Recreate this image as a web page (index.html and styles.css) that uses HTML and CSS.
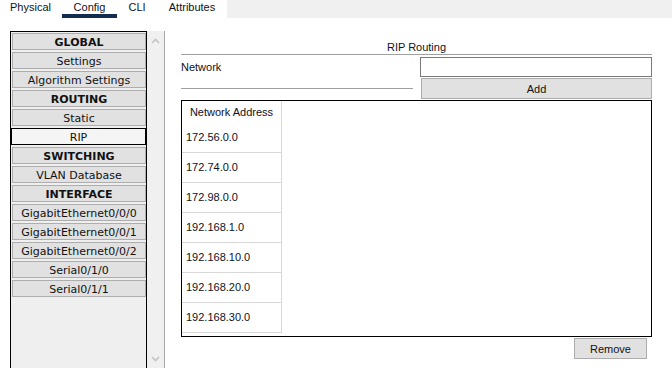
FILE: index.html
```html
<!DOCTYPE html>
<html lang="en">

<head>
    <meta charset="UTF-8">
    <title>Router - Config</title>
    <link rel="stylesheet" href="styles.css">
</head>

<body>
    <!-- Top tabs -->
    <div class="tabs">
        <div class="tab tabPhysical">Physical</div>
        <div class="tab tabConfig active">Config</div>
        <div class="tab tabCli">CLI</div>
        <div class="tab tabAttr">Attributes</div>
        <div class="tabsFill"></div>
    </div>

    <div class="main">
        <!-- Left menu -->
        <div class="side">
            <div class="sideList">
                <div class="item head">GLOBAL</div>
                <div class="item">Settings</div>
                <div class="item">Algorithm Settings</div>
                <div class="item head">ROUTING</div>
                <div class="item">Static</div>
                <div class="item selected">RIP</div>
                <div class="item head">SWITCHING</div>
                <div class="item">VLAN Database</div>
                <div class="item head">INTERFACE</div>
                <div class="item">GigabitEthernet0/0/0</div>
                <div class="item">GigabitEthernet0/0/1</div>
                <div class="item">GigabitEthernet0/0/2</div>
                <div class="item">Serial0/1/0</div>
                <div class="item">Serial0/1/1</div>
            </div>
            <div class="scroll">
                <svg width="9" height="6" viewBox="0 0 9 6"><path d="M1 5 L4.5 1.5 L8 5" fill="none" stroke="#c4c4c4" stroke-width="1.6"/></svg>
                <svg width="9" height="6" viewBox="0 0 9 6"><path d="M1 1 L4.5 4.5 L8 1" fill="none" stroke="#c4c4c4" stroke-width="1.6"/></svg>
            </div>
        </div>

        <!-- RIP panel -->
        <div class="panel">
            <div class="panelTitle">RIP Routing</div>
            <div class="netRow">
                <div class="netLabel">Network</div>
                <div class="netControls">
                    <input type="text" class="netInput">
                    <button class="btn addBtn">Add</button>
                </div>
            </div>
            <div class="netTable">
                <div class="netCol">
                    <div class="netHead">Network Address</div>
                    <div class="netCell">172.56.0.0</div>
                    <div class="netCell">172.74.0.0</div>
                    <div class="netCell">172.98.0.0</div>
                    <div class="netCell">192.168.1.0</div>
                    <div class="netCell">192.168.10.0</div>
                    <div class="netCell">192.168.20.0</div>
                    <div class="netCell">192.168.30.0</div>
                </div>
            </div>
            <div class="panelFoot">
                <button class="btn removeBtn">Remove</button>
            </div>
        </div>
    </div>
</body>

</html>
```

FILE: styles.css
```css
body {
    margin: 0;
    background-color: #ffffff;
    font-family: "Liberation Sans", Arial, sans-serif;
    font-size: 11px;
    color: #111122;
    overflow: hidden;
    height: 368px;
}

/* tabs */
.tabs {
    display: flex;
    height: 18px;
}

.tab {
    box-sizing: border-box;
    height: 18px;
    line-height: 15px;
    text-align: center;
}

.tabPhysical {
    width: 62px;
    padding-left: 10px;
    text-align: left;
}

.tabConfig {
    width: 55px;
}

.tabCli {
    width: 40px;
}

.tabAttr {
    width: 70px;
}

.tab.active {
    border-bottom: 4px solid #132c4f;
}

.tabsFill {
    flex: 1;
    background-color: #f0f0f0;
}

.main {
    display: flex;
    margin-top: 13px;
    height: 337px;
}

/* left menu */
.side {
    display: flex;
    padding-left: 10px;
}

.sideList {
    box-sizing: border-box;
    width: 137px;
    height: 340px;
    border: 1px solid #000;
    background-color: #efefef;
    padding: 1px 0 0 1px;
    font-family: "DejaVu Sans", Tahoma, sans-serif;
    font-size: 11px;
    color: #111;
}

.item {
    box-sizing: border-box;
    height: 17px;
    line-height: 15px;
    padding-top: 1px;
    margin-bottom: 2px;
    background-color: #e1e1e1;
    border: 1px solid #adadad;
    text-align: center;
    white-space: nowrap;
}

.item.head {
    font-weight: bold;
}

.item.selected {
    background-color: #f5f5f5;
    border-color: #000;
    margin-left: -1px;
}

.scroll {
    box-sizing: border-box;
    width: 18px;
    height: 340px;
    background-color: #f0f0f0;
    border-right: 1px solid #a6a6a6;
    display: flex;
    flex-direction: column;
    justify-content: space-between;
    align-items: center;
    padding: 7px 0 9px 0;
}

/* panel */
.panel {
    width: 471px;
    margin-left: 16px;
    padding-top: 10px;
}

.panelTitle {
    height: 13px;
    line-height: 13px;
    text-align: center;
    border-bottom: 1px solid #a0a0a0;
}

.netRow {
    display: flex;
    justify-content: space-between;
    margin-top: 2px;
}

.netLabel {
    box-sizing: border-box;
    width: 232px;
    height: 32px;
    line-height: 20px;
    border-bottom: 1px solid #a0a0a0;
}

.netControls {
    width: 232px;
    display: flex;
    flex-direction: column;
}

.netInput {
    box-sizing: border-box;
    width: 232px;
    height: 20px;
    margin: 0;
    border: 1px solid #7a7a7a;
    background: #fff;
}

.btn {
    box-sizing: border-box;
    background-color: #e1e1e1;
    border: 1px solid #adadad;
    font-family: "Liberation Sans", Arial, sans-serif;
    font-size: 11px;
    color: #111;
    padding: 0;
}

.addBtn {
    width: 231px;
    height: 21px;
    margin: 1px 0 0 1px;
}

.netTable {
    box-sizing: border-box;
    height: 237px;
    margin-top: 1px;
    border: 1px solid #000;
    background: #fff;
}

.netCol {
    width: 100px;
    border-right: 1px solid #d8d8d8;
    box-sizing: border-box;
}

.netHead {
    height: 22px;
    line-height: 22px;
    text-align: center;
}

.netCell {
    box-sizing: border-box;
    height: 30px;
    line-height: 29px;
    padding-left: 4px;
    border-bottom: 1px solid #d8d8d8;
}

.panelFoot {
    display: flex;
    justify-content: flex-end;
    padding-right: 5px;
    margin-top: 1px;
}

.removeBtn {
    width: 73px;
    height: 21px;
}
```
